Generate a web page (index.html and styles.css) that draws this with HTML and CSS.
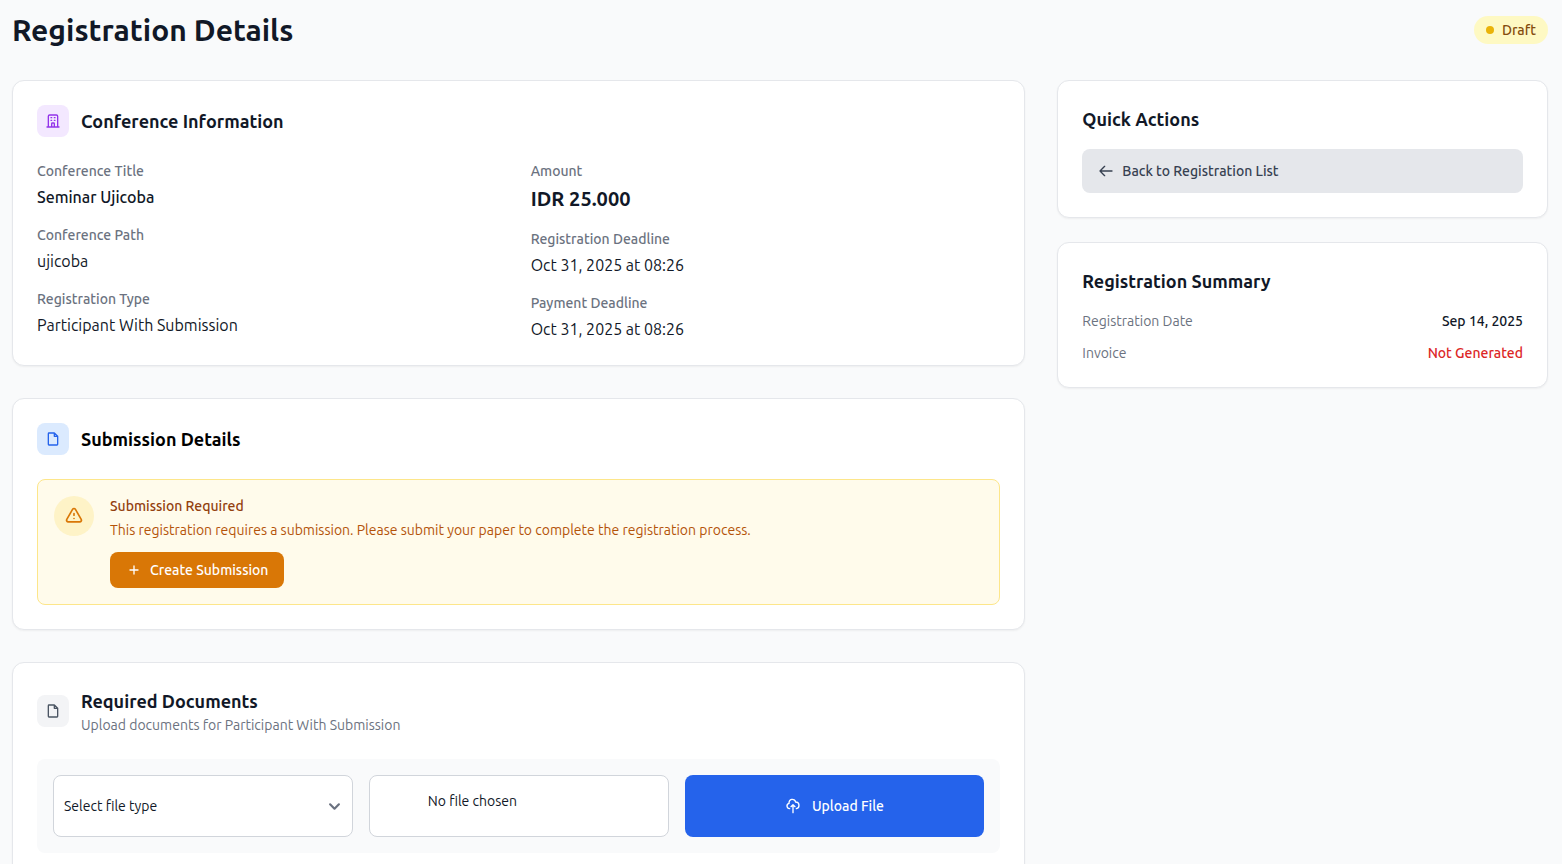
FILE: index.html
```html
<!DOCTYPE html>
<html lang="en">

<head>
  <meta charset="utf-8" />
  <meta name="viewport" content="width=device-width, initial-scale=1" />
  <title>Registration Details</title>
  <link rel="stylesheet" href="styles.css">
</head>

<body>
  <div class="page">
    <header class="page_header">
      <h1 class="page_title">Registration Details</h1>
      <span class="status_badge"><span class="status_dot"></span>Draft</span>
    </header>

    <div class="page_grid">
      <main class="main_column">

        <!-- Conference information -->
        <section class="card">
          <div class="card_header">
            <div class="icon_box icon_box_purple">
              <svg class="icon" viewBox="0 0 24 24"><path d="M19 21V5a2 2 0 00-2-2H7a2 2 0 00-2 2v16m14 0h2m-2 0h-5m-9 0H3m2 0h5M9 7h1m-1 4h1m4-4h1m-1 4h1m-5 10v-5a1 1 0 011-1h2a1 1 0 011 1v5m-4 0h4" /></svg>
            </div>
            <h2 class="card_title">Conference Information</h2>
          </div>
          <div class="info_grid">
            <dl class="info_list">
              <div>
                <dt>Conference Title</dt>
                <dd class="medium">Seminar Ujicoba</dd>
              </div>
              <div>
                <dt>Conference Path</dt>
                <dd>ujicoba</dd>
              </div>
              <div>
                <dt>Registration Type</dt>
                <dd>Participant With Submission</dd>
              </div>
            </dl>
            <dl class="info_list">
              <div>
                <dt>Amount</dt>
                <dd class="amount">IDR 25.000</dd>
              </div>
              <div>
                <dt>Registration Deadline</dt>
                <dd>Oct 31, 2025 at 08:26</dd>
              </div>
              <div>
                <dt>Payment Deadline</dt>
                <dd>Oct 31, 2025 at 08:26</dd>
              </div>
            </dl>
          </div>
        </section>

        <!-- Submission -->
        <section class="card">
          <div class="card_header">
            <div class="icon_box icon_box_blue">
              <svg class="icon" viewBox="0 0 24 24"><path d="M14 3H6a1 1 0 00-1 1v16a1 1 0 001 1h12a1 1 0 001-1V8zv5h5" /></svg>
            </div>
            <h2 class="card_title card_title_black">Submission Details</h2>
          </div>
          <div class="alert">
            <div class="alert_icon">
              <svg class="icon icon_large" viewBox="0 0 24 24"><path d="M12 9v2m0 4h.01m-6.938 4h13.856c1.54 0 2.502-1.667 1.732-3L13.732 4c-.77-1.333-2.694-1.333-3.464 0L3.34 16c-.77 1.333.192 3 1.732 3z" /></svg>
            </div>
            <div class="alert_body">
              <h3 class="alert_title">Submission Required</h3>
              <p class="alert_text">This registration requires a submission. Please submit your paper to complete the registration process.</p>
              <button type="button" class="btn btn_amber">
                <svg class="icon" viewBox="0 0 24 24"><path d="M12 6v6m0 0v6m0-6h6m-6 0H6" /></svg>
                Create Submission
              </button>
            </div>
          </div>
        </section>

        <!-- Documents -->
        <section class="card">
          <div class="card_header">
            <div class="icon_box icon_box_gray">
              <svg class="icon" viewBox="0 0 24 24"><path d="M14 3H6a1 1 0 00-1 1v16a1 1 0 001 1h12a1 1 0 001-1V8zv5h5" /></svg>
            </div>
            <div>
              <h2 class="card_title">Required Documents</h2>
              <p class="card_subtitle">Upload documents for Participant With Submission</p>
            </div>
          </div>
          <form class="upload_form">
            <div class="select_wrap">
              <select class="field" name="file_type" aria-label="File type">
                <option value="">Select file type</option>
              </select>
              <svg class="select_arrow" viewBox="0 0 10 6"><path d="M1 1l4 4 4-4" /></svg>
            </div>
            <input class="field file_field" type="file" name="document" aria-label="Document">
            <button type="button" class="btn btn_blue">
              <svg class="icon" viewBox="0 0 24 24"><path d="M7 16a4 4 0 01-.88-7.903A5 5 0 1115.9 6L16 6a5 5 0 011 9.9M15 13l-3-3m0 0l-3 3m3-3v12" /></svg>
              Upload File
            </button>
          </form>
        </section>
      </main>

      <aside class="side_column">
        <section class="card">
          <h2 class="card_title side_title">Quick Actions</h2>
          <a href="#" class="back_link">
            <svg class="icon" viewBox="0 0 24 24"><path d="M10 19l-7-7m0 0l7-7m-7 7h18" /></svg>
            Back to Registration List
          </a>
        </section>

        <section class="card">
          <h2 class="card_title side_title">Registration Summary</h2>
          <dl class="summary_list">
            <div class="summary_row">
              <dt>Registration Date</dt>
              <dd>Sep 14, 2025</dd>
            </div>
            <div class="summary_row">
              <dt>Invoice</dt>
              <dd class="danger">Not Generated</dd>
            </div>
          </dl>
        </section>
      </aside>
    </div>
  </div>
</body>

</html>
```
FILE: styles.css
```css
* {
  box-sizing: border-box;
  margin: 0;
  padding: 0;
}

body {
  font-family: Ubuntu, "Open Sans", sans-serif;
  font-size: 14px;
  line-height: 20px;
  color: #111827;
  background-color: #f9fafb;
}

button,
select,
input {
  font: inherit;
}

.page {
  padding: 12px 14px 24px 12px;
}

.page_header {
  display: flex;
  align-items: center;
  justify-content: space-between;
  margin-bottom: 32px;
}

.page_title {
  font-size: 30px;
  line-height: 36px;
  font-weight: 700;
}

.status_badge {
  display: inline-flex;
  align-items: center;
  gap: 8px;
  padding: 4px 12px;
  border-radius: 14px;
  background-color: #fef9c3;
  color: #854d0e;
  font-weight: 500;
}

.status_dot {
  width: 8px;
  height: 8px;
  border-radius: 50%;
  background-color: #eab308;
}

.page_grid {
  display: grid;
  grid-template-columns: repeat(3, minmax(0, 1fr));
  gap: 32px;
}

.main_column {
  grid-column: span 2;
  display: flex;
  flex-direction: column;
  gap: 32px;
}

.side_column {
  display: flex;
  flex-direction: column;
  gap: 24px;
}

.card {
  padding: 24px;
  border: 1px solid #e5e7eb;
  border-radius: 12px;
  background-color: #ffffff;
  box-shadow: 0 1px 2px rgba(0, 0, 0, 0.05);
}

.card_header {
  display: flex;
  align-items: center;
  gap: 12px;
  margin-bottom: 24px;
}

.card_title {
  font-size: 18px;
  line-height: 28px;
  font-weight: 600;
}

.card_title_black {
  color: #000000;
}

.card_subtitle {
  color: #6b7280;
}

.side_title {
  margin-bottom: 16px;
}

/* icons */
.icon {
  flex: none;
  width: 16px;
  height: 16px;
  fill: none;
  stroke: currentColor;
  stroke-width: 2;
  stroke-linecap: round;
  stroke-linejoin: round;
}

.icon_large {
  width: 20px;
  height: 20px;
}

.icon_box {
  display: flex;
  align-items: center;
  justify-content: center;
  width: 32px;
  height: 32px;
  border-radius: 8px;
}

.icon_box_purple {
  background-color: #f3e8ff;
  color: #9333ea;
}

.icon_box_blue {
  background-color: #dbeafe;
  color: #2563eb;
}

.icon_box_gray {
  background-color: #f3f4f6;
  color: #4b5563;
}

/* conference information */
.info_grid {
  display: grid;
  grid-template-columns: 1fr 1fr;
  gap: 24px;
}

.info_list {
  display: flex;
  flex-direction: column;
  gap: 16px;
}

.info_list dt {
  margin-bottom: 4px;
  font-weight: 500;
  color: #6b7280;
}

.info_list dd {
  font-size: 16px;
  line-height: 24px;
}

.info_list .medium {
  font-weight: 500;
}

.info_list .amount {
  font-size: 20px;
  line-height: 28px;
  font-weight: 600;
}

/* submission alert */
.alert {
  display: flex;
  gap: 16px;
  padding: 16px;
  border: 1px solid #fde68a;
  border-radius: 8px;
  background-color: #fffbeb;
}

.alert_icon {
  display: flex;
  flex: none;
  align-items: center;
  justify-content: center;
  width: 40px;
  height: 40px;
  border-radius: 50%;
  background-color: #fef3c7;
  color: #d97706;
}

.alert_title {
  margin-bottom: 4px;
  font-size: 14px;
  font-weight: 500;
  color: #92400e;
}

.alert_text {
  margin-bottom: 12px;
  color: #b45309;
}

.btn {
  display: inline-flex;
  align-items: center;
  justify-content: center;
  gap: 8px;
  padding: 8px 16px;
  border: 0;
  border-radius: 8px;
  color: #ffffff;
  font-weight: 500;
  cursor: pointer;
}

.btn_amber {
  background-color: #d97706;
}

.btn_blue {
  gap: 11px;
  background-color: #2563eb;
}

/* upload form */
.upload_form {
  display: grid;
  grid-template-columns: repeat(3, minmax(0, 1fr));
  gap: 16px;
  padding: 16px;
  border-radius: 8px;
  background-color: #f9fafb;
}

.field {
  width: 100%;
  height: 62px;
  border: 1px solid #d1d5db;
  border-radius: 8px;
  background-color: #ffffff;
  color: #111827;
}

.select_wrap {
  position: relative;
}

.select_wrap .field {
  padding: 0 40px 0 10px;
  appearance: none;
}

.select_arrow {
  position: absolute;
  top: 26px;
  right: 13px;
  width: 11px;
  height: 11px;
  overflow: visible;
  fill: none;
  stroke: #6b7280;
  stroke-width: 2;
  stroke-linecap: round;
  stroke-linejoin: round;
  pointer-events: none;
}

.file_field {
  padding: 15px 8px;
}

.file_field::file-selector-button {
  width: 46px;
  height: 20px;
  border: 0;
  background: none;
  font-size: 0;
}

/* side column */
.back_link {
  display: flex;
  align-items: center;
  gap: 8px;
  padding: 12px 16px;
  border-radius: 8px;
  background-color: #e5e7eb;
  color: #374151;
  font-weight: 500;
  text-decoration: none;
}

.summary_list {
  display: flex;
  flex-direction: column;
  gap: 12px;
}

.summary_row {
  display: flex;
  justify-content: space-between;
}

.summary_row dt {
  color: #6b7280;
}

.summary_row dd {
  font-weight: 500;
}

.summary_row .danger {
  color: #dc2626;
}

@media (max-width: 900px) {
  .page_grid,
  .upload_form {
    grid-template-columns: minmax(0, 1fr);
  }

  .main_column {
    grid-column: auto;
  }
}
```
